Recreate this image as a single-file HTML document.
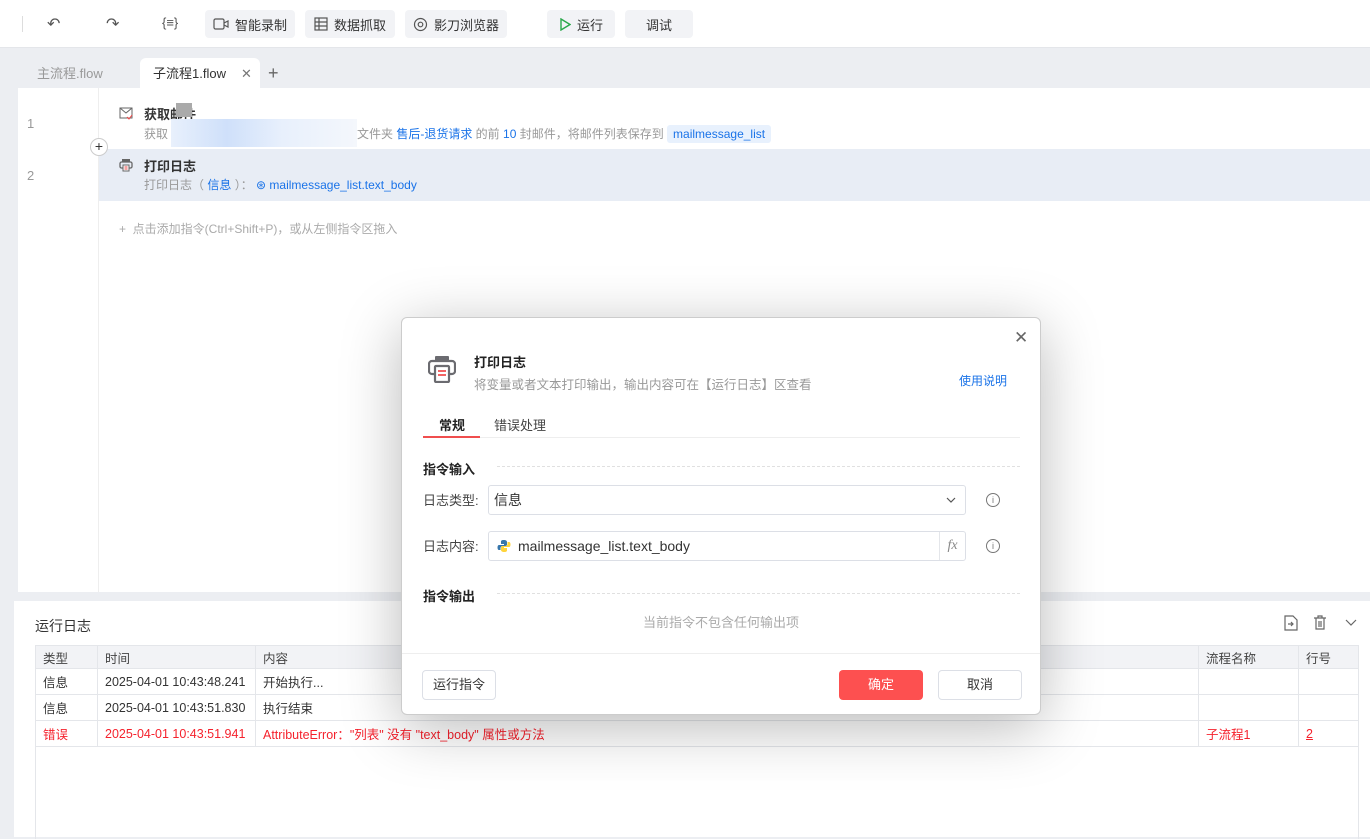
<!DOCTYPE html>
<html><head><meta charset="utf-8"><style>
*{box-sizing:border-box;margin:0;padding:0}
body{width:1370px;height:837px;overflow:hidden;background:#eceef2;font-family:"Liberation Sans","Noto Sans CJK SC",sans-serif;font-size:13px;color:#333;position:relative}
.abs{position:absolute}
.tb{left:0;top:0;width:1370px;height:48px;background:#fff;border-bottom:1px solid #e4e6ea}
.btn{position:absolute;top:10px;height:28px;background:#f2f3f6;border-radius:4px;display:flex;align-items:center;justify-content:center;gap:6px;font-size:13px;color:#333}
.ic{position:absolute;top:14px;color:#555;font-size:16px}
.tab{top:59px;height:30px;line-height:30px;font-size:13px}
.ed{left:18px;top:88px;width:1352px;height:504px;background:#fff}
.gray{color:#999}
.blue{color:#1a73e8}
.panel{left:14px;top:601px;width:1356px;height:236px;background:#fff}
table{border-collapse:collapse;position:absolute;left:35px;top:645px;width:1324px;font-size:12.5px;table-layout:fixed}
td{border:1px solid #e4e6ea;height:26px;padding:0 7px;white-space:nowrap}
tr.h td{background:#f2f3f6;height:23px;color:#444}
.red td{color:#f5222d}
.dlg{left:401px;top:317px;width:640px;height:398px;background:#fff;border-radius:6px;border:1px solid #ccc;box-shadow:0 12px 60px rgba(0,0,0,.28)}
.inp{position:absolute;left:86px;width:478px;height:30px;border:1px solid #dcdfe6;border-radius:3px;display:flex;align-items:center;font-size:14px}
.dash{position:absolute;left:95px;width:523px;border-top:1px dashed #e0e0e0}
.info{position:absolute;left:584px;width:14px;height:14px;border:1px solid #777;border-radius:50%;font-size:9px;text-align:center;line-height:12px;color:#777}
</style></head><body>
<div class="abs tb">
  <div class="abs" style="left:22px;top:16px;width:1px;height:16px;background:#ddd"></div>
  <div class="ic" style="left:47px">↶</div>
  <div class="ic" style="left:106px">↷</div>
  <div class="ic" style="left:162px;font-size:13px;top:15px">{≡}</div>
  <div class="btn" style="left:205px;width:90px"><svg width="16" height="14" viewBox="0 0 16 14"><rect x="1" y="2" width="10" height="10" rx="1.5" fill="none" stroke="#555" stroke-width="1.2"/><path d="M11 6l4-2v6l-4-2" fill="none" stroke="#555" stroke-width="1.2"/></svg>智能录制</div>
  <div class="btn" style="left:305px;width:90px"><svg width="14" height="14"><rect x="1" y="1" width="12" height="12" fill="none" stroke="#555" stroke-width="1.2"/><path d="M1 5h12M1 9h12M5 1v12" stroke="#555" stroke-width="1.2"/></svg>数据抓取</div>
  <div class="btn" style="left:405px;width:102px"><svg width="15" height="15"><circle cx="7.5" cy="7.5" r="6" fill="none" stroke="#555" stroke-width="1.2"/><circle cx="7.5" cy="7.5" r="2.3" fill="none" stroke="#555" stroke-width="1.2"/></svg>影刀浏览器</div>
  <div class="btn" style="left:547px;width:68px"><svg width="12" height="13"><path d="M2 1l9 5.5-9 5.5z" fill="none" stroke="#2aa84a" stroke-width="1.4"/></svg>运行</div>
  <div class="btn" style="left:625px;width:68px">调试</div>
</div>
<div class="abs tab gray" style="left:37px">主流程.flow</div>
<div class="abs tab" style="left:140px;top:58px;width:120px;background:#fff;border-radius:6px 6px 0 0;padding-left:13px;line-height:31px">子流程1.flow<span style="position:absolute;left:101px;color:#777">✕</span></div>
<div class="abs tab" style="left:268px;font-size:18px;color:#666;line-height:28px">+</div>
<div class="abs ed">
  <div class="abs" style="left:80px;top:0;width:1px;height:504px;background:#eee"></div>
  <div class="abs gray" style="left:9px;top:28px">1</div>
  <div class="abs gray" style="left:9px;top:80px">2</div>
  <div class="abs" style="left:81px;top:61px;width:1271px;height:52px;background:#e8edf5"></div>
  <svg class="abs" style="left:101px;top:19px" width="14" height="13"><rect x="1" y="1" width="12" height="10" fill="none" stroke="#666"/><path d="M1 1l6 5 6-5" fill="none" stroke="#666"/><path d="M8 10l2 2 3-4" fill="none" stroke="#e44"/></svg>
  <div class="abs" style="left:126px;top:16px;font-weight:bold">获取邮件</div>
  <div class="abs" style="left:158px;top:15px;width:16px;height:14px;background:#aaa"></div>
  <div class="abs" style="left:126px;top:37px;font-size:12px" ><span class="gray">获取</span></div>
  <div class="abs" style="left:153px;top:31px;width:186px;height:28px;background:linear-gradient(90deg,#e8f0fc,#cfe0fa 30%,#e8f0fc 60%,#f4f7fc)"></div>
  <div class="abs" style="left:339px;top:37px;font-size:12px"><span class="gray">文件夹 </span><span class="blue">售后-退货请求</span><span class="gray"> 的前 </span><span class="blue">10</span><span class="gray"> 封邮件，将邮件列表保存到 </span><span class="blue" style="background:#e8f1fd;padding:2px 6px;border-radius:3px">mailmessage_list</span></div>
  <div class="abs" style="left:72px;top:50px;width:18px;height:18px;border:1px solid #ccc;border-radius:50%;background:#fff;text-align:center;line-height:15px;font-size:14px">+</div>
  <svg class="abs" style="left:101px;top:70px" width="14" height="14"><rect x="3" y="1" width="8" height="3" fill="#666"/><rect x="1" y="4" width="12" height="6" rx="1.5" fill="none" stroke="#666" stroke-width="1.3"/><rect x="4" y="7" width="6" height="6" fill="#fff" stroke="#666"/><path d="M5.5 9h3M5.5 11h3" stroke="#e44"/></svg>
  <div class="abs" style="left:126px;top:68px;font-weight:bold">打印日志</div>
  <div class="abs" style="left:126px;top:88px;font-size:12px"><span class="gray">打印日志（ </span><span class="blue">信息</span><span class="gray"> ）：  </span><span class="blue">⊛ mailmessage_list.text_body</span></div>
  <div class="abs" style="left:101px;top:132px;font-size:12px;color:#aaa">+&nbsp; 点击添加指令(Ctrl+Shift+P)，或从左侧指令区拖入</div>
</div>
<div class="abs panel">
  <div class="abs" style="left:21px;top:15px;font-size:14px;color:#333">运行日志</div>
  <svg class="abs" style="left:1270px;top:14px" width="14" height="16"><path d="M1 1h8l4 4v10H1z" fill="none" stroke="#666" stroke-width="1.2"/><path d="M4 9h5M7 7l2 2-2 2" fill="none" stroke="#666" stroke-width="1.2"/></svg>
  <svg class="abs" style="left:1299px;top:14px" width="14" height="15"><path d="M1 3h12M5 3V1h4v2M3 3v11h8V3M6 6v6M8 6v6" fill="none" stroke="#666" stroke-width="1.2"/></svg>
  <svg class="abs" style="left:1331px;top:18px" width="12" height="8"><path d="M1 1l5 5 5-5" fill="none" stroke="#666" stroke-width="1.2"/></svg>
</div>
<table>
<tr class="h"><td style="width:62px">类型</td><td style="width:158px">时间</td><td style="width:943px">内容</td><td style="width:100px">流程名称</td><td>行号</td></tr>
<tr><td>信息</td><td>2025-04-01 10:43:48.241</td><td>开始执行...</td><td></td><td></td></tr>
<tr><td>信息</td><td>2025-04-01 10:43:51.830</td><td>执行结束</td><td></td><td></td></tr>
<tr class="red"><td>错误</td><td>2025-04-01 10:43:51.941</td><td>AttributeError："列表" 没有 "text_body" 属性或方法</td><td>子流程1</td><td><u>2</u></td></tr>
<tr><td style="height:92px;border-right:none;border-bottom:none"></td><td style="border:none"></td><td style="border:none"></td><td style="border:none"></td><td style="border-left:none;border-bottom:none"></td></tr>
</table>
<div class="abs dlg">
  <div class="abs" style="left:612px;top:10px;font-size:17px;color:#666">✕</div>
  <svg class="abs" style="left:26px;top:37px" width="28" height="28" viewBox="0 0 28 28"><rect x="7" y="1" width="14" height="5" rx="1" fill="#6b6b70"/><rect x="1" y="6" width="26" height="13" rx="3" fill="none" stroke="#6b6b70" stroke-width="2.2"/><rect x="7" y="11" width="14" height="16" rx="1" fill="#fff" stroke="#6b6b70" stroke-width="2.2"/><path d="M10 16h8M10 20h8" stroke="#f04e4e" stroke-width="1.8"/></svg>
  <div class="abs" style="left:72px;top:34px;font-weight:bold;font-size:13px;color:#222">打印日志</div>
  <div class="abs" style="left:72px;top:56px;font-size:12.5px;color:#999">将变量或者文本打印输出，输出内容可在【运行日志】区查看</div>
  <div class="abs blue" style="left:557px;top:54px;font-size:12px">使用说明</div>
  <div class="abs" style="left:37px;top:97px;font-size:13px;font-weight:bold;color:#222">常规</div>
  <div class="abs" style="left:92px;top:97px;font-size:13px;color:#444">错误处理</div>
  <div class="abs" style="left:21px;top:119px;width:597px;height:1px;background:#eee"></div>
  <div class="abs" style="left:21px;top:118px;width:57px;height:2px;background:#f04e4e"></div>
  <div class="abs" style="left:21px;top:141px;font-weight:bold;color:#222">指令输入</div>
  <div class="dash" style="top:148px"></div>
  <div class="abs" style="left:21px;top:172px;color:#444">日志类型:</div>
  <div class="inp" style="top:167px;padding-left:5px">信息<svg style="position:absolute;right:9px;top:11px" width="10" height="6"><path d="M1 1l4 4 4-4" fill="none" stroke="#555" stroke-width="1.2"/></svg></div>
  <div class="info" style="top:175px">i</div>
  <div class="abs" style="left:21px;top:218px;color:#444">日志内容:</div>
  <div class="inp" style="top:213px;padding-left:8px"><svg width="14" height="14"><path d="M7 1c-3 0-3 1-3 2v2h3v1H2c-1 0-1.5 1-1.5 2.5S1 11 2 11h1.5V9c0-1 1-2 2-2h3c1 0 1.5-1 1.5-1.5V3c0-1-1-2-3-2z" fill="#3776ab"/><path d="M7 13c3 0 3-1 3-2V9H7V8h5c1 0 1.5-1 1.5-2.5S13 3 12 3h-1.5v2c0 1-1 2-2 2h-3C4.5 7 4 8 4 8.5V11c0 1 1 2 3 2z" fill="#ffd43b"/></svg><span style="margin-left:7px">mailmessage_list.text_body</span><span style="position:absolute;right:0;top:0;width:26px;height:28px;border-left:1px solid #e4e6ea;text-align:center;line-height:28px;color:#888;font-style:italic;font-family:'Liberation Serif',serif">fx</span></div>
  <div class="info" style="top:221px">i</div>
  <div class="abs" style="left:21px;top:268px;font-weight:bold;color:#222">指令输出</div>
  <div class="dash" style="top:275px"></div>
  <div class="abs" style="left:241px;top:294px;color:#aaa">当前指令不包含任何输出项</div>
  <div class="abs" style="left:0;top:335px;width:638px;height:1px;background:#eee"></div>
  <div class="abs" style="left:20px;top:352px;width:74px;height:30px;border:1px solid #dcdfe6;border-radius:4px;text-align:center;line-height:28px">运行指令</div>
  <div class="abs" style="left:437px;top:352px;width:84px;height:30px;background:#fd5050;border-radius:4px;text-align:center;line-height:30px;color:#fff">确定</div>
  <div class="abs" style="left:536px;top:352px;width:84px;height:30px;border:1px solid #dcdfe6;border-radius:4px;text-align:center;line-height:28px">取消</div>
</div>
</body></html>
